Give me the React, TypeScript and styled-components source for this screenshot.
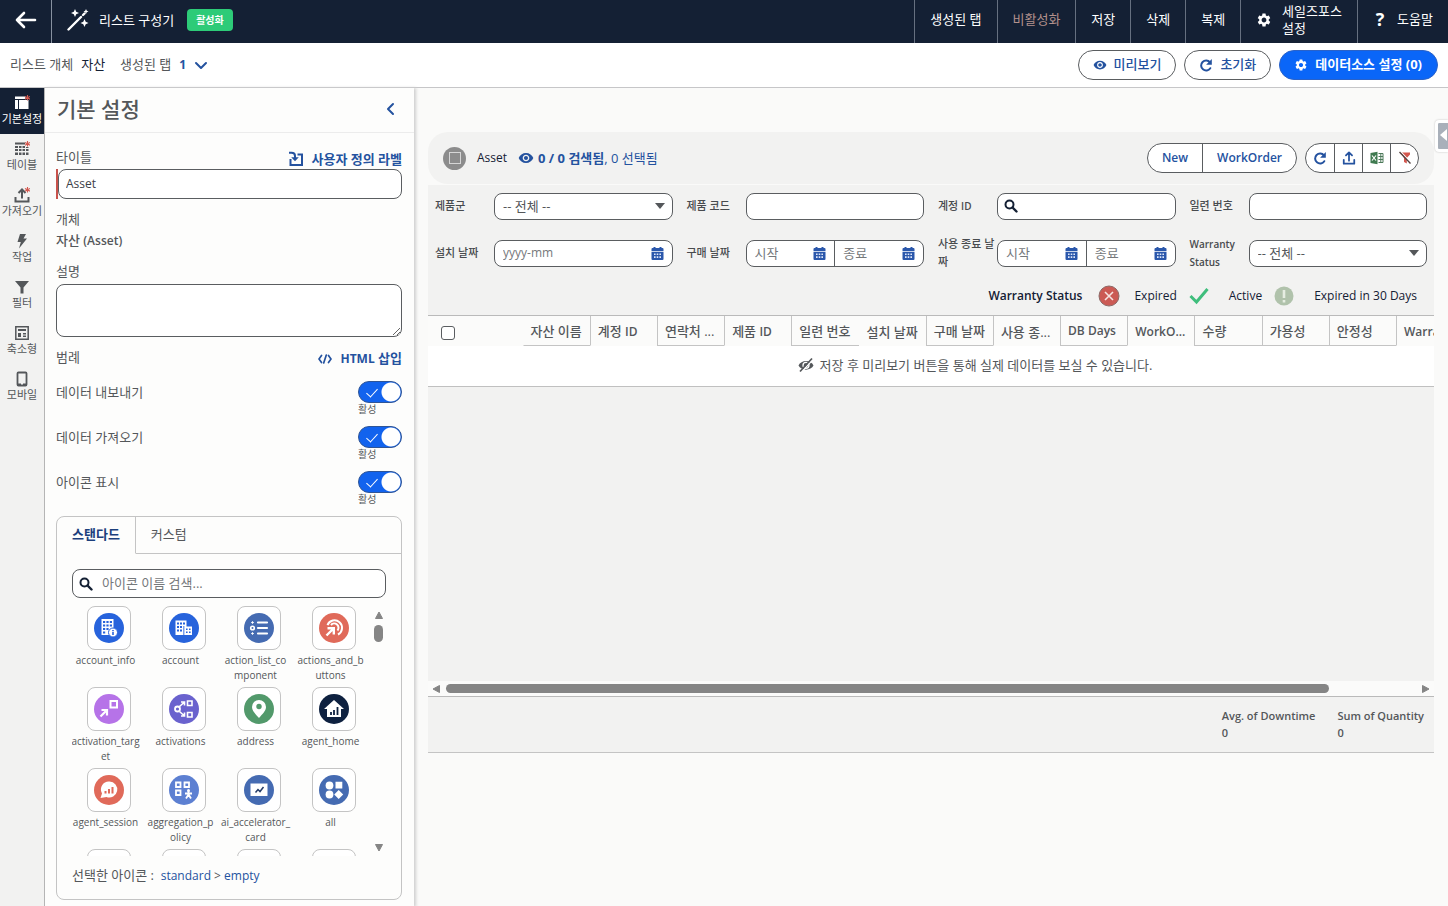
import React from "react";
import styled, { createGlobalStyle, css } from "styled-components";
import { MdSettings, MdVisibility, MdVisibilityOff } from "react-icons/md";

const navy = "#142034";
const link = "#24529f";
const ink = "#54575a";
const line = "#5a5d60";
const soft = "#c4c4c4";
const grey = "#f2f2f1";

const GlobalStyle = createGlobalStyle`
  *, *::before, *::after { box-sizing: border-box; }
  body {
    margin: 0;
    background: #fafaf9;
    color: ${ink};
    font: 13px/18px "Open Sans", "Noto Sans CJK KR", sans-serif;
  }
  button, input, select, textarea { font: inherit; color: inherit; margin: 0; }
  button { background: none; border: 0; padding: 0; cursor: pointer; }
  a { color: ${link}; text-decoration: none; }
`;

/* Latin words set one size down, so that they sit evenly beside Hangul */
const Latin = styled.span<{ $strong?: boolean; $small?: boolean }>`
  font-size: ${(p) => (p.$small ? 10 : 12)}px;
  ${(p) => p.$strong && "font-weight: 600;"}
`;

/* ---------- icons ---------- */

const Glyph = styled.svg<{ $size?: number }>`
  width: ${(p) => p.$size ?? 16}px;
  height: ${(p) => p.$size ?? 16}px;
  flex: none;
  display: block;
  fill: none;
  stroke: currentColor;
  stroke-width: 2;
`;

const BackIcon = () => (
  <Glyph viewBox="0 0 22 22" $size={22} strokeLinecap="round" strokeLinejoin="round">
    <path d="M20 11H2M9 4l-7 7 7 7" strokeWidth="2.6" />
  </Glyph>
);

const WandIcon = () => (
  <Glyph viewBox="0 0 22 22" $size={22}>
    <path d="M1.500 20.500L14 8M16 6l1.500-1.500" strokeWidth="2.4" strokeLinecap="round" />
    <g fill="currentColor" stroke="none">
      <path d="M8 0l1.200 2.800L12 4l-2.800 1.200L8 8 6.800 5.200 4 4l2.800-1.200z" />
      <path d="M19 0l.8 1.700 1.700.8-1.700.8L19 5l-.8-1.700-1.700-.8 1.700-.8z" />
      <path d="M17.500 10l1.200 2.800 2.800 1.200-2.800 1.200-1.200 2.800-1.200-2.800-2.800-1.200 2.800-1.200z" />
    </g>
  </Glyph>
);

const Chevron = ({ left }: { left?: boolean }) => (
  <Glyph viewBox="0 0 14 14" $size={14} strokeLinecap="round" strokeLinejoin="round">
    <path d={left ? "M9 2L4 7l5 5" : "M2 5l5 5 5-5"} />
  </Glyph>
);

const RefreshIcon = () => (
  <Glyph viewBox="0 0 14 14" $size={14}>
    <path d="M11.300 10.200A5 5 0 1 1 11 4.300" strokeLinecap="round" />
    <path d="M12.800 1v5.700H7.100z" fill="currentColor" stroke="none" />
  </Glyph>
);

const SearchIcon = () => (
  <Glyph viewBox="0 0 14 14" $size={14}>
    <circle cx="5.500" cy="5.500" r="4" />
    <path d="M8.500 8.500l4 4" strokeWidth="2.400" strokeLinecap="round" />
  </Glyph>
);

const UploadIcon = ({ size = 16 }: { size?: number }) => (
  <Glyph viewBox="0 0 15 16" $size={size} strokeLinecap="round" strokeLinejoin="round">
    <path d="M1.500 10v4.500h12V10M7.500 11V2M4 5l3.500-3.500L11 5" />
  </Glyph>
);

const ImportIcon = () => (
  <Glyph viewBox="0 0 16 16">
    <path d="M9.500 3.500H14v10.500H2.500V8" />
    <path d="M1 1.800h2.500c2.200 0 3.500 1 3.500 3.200v2.500" />
    <path d="M3.200 6.200h7.600L7 10.200z" fill="currentColor" stroke="none" />
  </Glyph>
);

const CodeIcon = () => (
  <Glyph viewBox="0 0 14 14" $size={14} strokeLinecap="round">
    <path d="M3.500 3.500L1 7l2.500 3.500M10.500 3.500L13 7l-2.500 3.500M8.300 3L5.700 11" strokeWidth="1.700" />
  </Glyph>
);

const CalendarIcon = () => (
  <Glyph viewBox="0 0 12 13" $size={13}>
    <g fill="#2a57ab" stroke="none">
      <path d="M2 0h2v1h4V0h2v1h1a1 1 0 0 1 1 1v2H0V2a1 1 0 0 1 1-1h1z" />
      <path d="M0 4.800h12V12a1 1 0 0 1-1 1H1a1 1 0 0 1-1-1z" />
    </g>
    <path
      d="M2.500 6.500h1.600v1.600H2.500zM5.200 6.500h1.600v1.600H5.200zM7.900 6.500h1.600v1.600H7.900zM2.500 9.300h1.600v1.600H2.500zM5.200 9.300h1.600v1.600H5.200zM7.900 9.300h1.600v1.600H7.900z"
      fill="#dfe8fa"
      stroke="none"
    />
  </Glyph>
);

const ExcelIcon = () => (
  <Glyph viewBox="0 0 14 14" $size={14}>
    <path d="M.5 2l7-1.200v12.400L.5 12z" fill="#3f7a50" stroke="none" />
    <path d="M2 4.500l4 5M6 4.500l-4 5" stroke="#fff" strokeWidth="1.200" />
    <path d="M8.500 2.500H13v9H8.500M8.500 5.500H13M8.500 8.500H13M10.800 2.500v9" stroke="#4d7a5a" strokeWidth="1" />
  </Glyph>
);

const FilterOffIcon = () => (
  <Glyph viewBox="0 0 14 14" $size={14}>
    <path d="M2.500 1.500h9.500v2L8.800 7v5.500L6 11V7z" fill="#d4574e" stroke="none" />
    <path d="M3 .8l10 11" stroke="#fff" strokeWidth="1.200" />
    <path d="M1.500 1l11 11.500" stroke="#52403f" strokeWidth="1.300" />
  </Glyph>
);

const HiddenIcon = () => (
  <Glyph viewBox="0 0 16 16">
    <path d="M.5 8.500C3 2.500 13 2.500 15.500 8.500 13 14 3 14 .5 8.500z" fill="currentColor" stroke="none" />
    <circle cx="8" cy="8.300" r="3" stroke="#fff" strokeWidth="1.300" />
    <path d="M15 2.500L3.500 15" stroke="#fff" strokeWidth="1.400" />
    <path d="M14 1.500L2 14.500" strokeWidth="1.700" />
  </Glyph>
);

const Star = () => <path d="M13.500 0v5.600M11 1.400l5 2.800M16 1.400l-5 2.800" stroke="#d4574e" strokeWidth="1.100" />;

const railIcons: Record<string, React.ReactNode> = {
  basic: (
    <>
      <path d="M1 1.500h10.500v2.500H1zM1 5h3v9H1zM5 5h9.500v9H5z" fill="currentColor" stroke="none" />
      <Star />
    </>
  ),
  table: (
    <>
      <path
        d="M1 1.500h10v2H1zM1 5h3v2H1zM5 5h2.500v2H5zM8.500 5h2.500v2H8.500zM12 6h2.500v1H12zM1 8h3v2H1zM5 8h2.500v2H5zM8.500 8h2.500v2H8.500zM12 8h2.500v2H12zM1 11.500h3v2.500H1zM5 11.500h2.500v2.500H5zM8.500 11.500h2.500v2.500H8.500zM12 11.500h2.500v2.500H12z"
        fill="currentColor"
        stroke="none"
      />
      <Star />
    </>
  ),
  upload: (
    <>
      <path d="M1.500 10v4.500h13V10M8 11.500V2.500M4.500 6L8 2.500 11.500 6" />
      <Star />
    </>
  ),
  bolt: <path d="M6 1h6L9.500 5.500H13L5 15.500l1.800-6.500H3.500z" fill="currentColor" stroke="none" />,
  filter: <path d="M1 2h14L9.500 8.500v6h-3v-6z" fill="currentColor" stroke="none" />,
  compact: (
    <>
      <path d="M1.800 1.800h12.400v12.400H1.800z" strokeWidth="1.500" />
      <path d="M4 4h8v2H4zM4 8h3v4H4zM9 8h3v1.500H9zM9 10.500h3V12H9z" fill="currentColor" stroke="none" />
    </>
  ),
  mobile: (
    <>
      <path d="M4.500 1.500h7a1 1 0 0 1 1 1v11a1 1 0 0 1-1 1h-7a1 1 0 0 1-1-1v-11a1 1 0 0 1 1-1z" strokeWidth="1.800" />
      <path d="M4 13.500h3M9 13.500h3" />
    </>
  ),
};

/* ---------- top bars ---------- */

const Page = styled.div`
  min-height: 100vh;
  display: flex;
  flex-direction: column;
`;

const TopBar = styled.header`
  display: flex;
  height: 43px;
  background: ${navy};
  color: #fff;
`;

const BackButton = styled.button`
  width: 52px;
  display: grid;
  place-items: center;
  padding-bottom: 4px;
  border-right: 1px solid #8791a0;
  color: #fff;
`;

const AppTitle = styled.h1`
  display: flex;
  align-items: center;
  gap: 10px;
  margin: 0;
  padding: 0 13px 4px 15px;
  font-size: 13px;
  font-weight: 400;
`;

const Badge = styled.span`
  align-self: center;
  margin-bottom: 3px;
  padding: 2px 9px;
  border-radius: 4px;
  background: #2dcb78;
  font-size: 10px;
  font-weight: 700;
`;

const TopActions = styled.nav`
  display: flex;
  margin-left: auto;
`;

const TopAction = styled.button<{ $muted?: boolean }>`
  display: flex;
  align-items: center;
  gap: 10px;
  padding: 0 15px 4px;
  border-left: 1px solid #667080;
  color: ${(p) => (p.$muted ? "#b3918c" : "#fff")};
  line-height: 17px;
  text-align: left;
`;

const TwoLine = styled.span`
  width: 60px;
`;

const Question = styled.span`
  width: 14px;
  font-size: 18px;
  font-weight: 700;
  text-align: center;
`;

const SubBar = styled.div`
  display: flex;
  align-items: center;
  gap: 8px;
  height: 45px;
  padding: 0 10px;
  background: #fff;
  border-bottom: 1px solid #c6c6c8;
`;

const Crumb = styled.span<{ $dark?: boolean; $gap?: boolean }>`
  padding-bottom: 2px;
  padding-left: ${(p) => (p.$gap ? 7 : 0)}px;
  color: ${(p) => (p.$dark ? navy : ink)};
`;

const TabCount = styled.button`
  display: flex;
  align-items: center;
  gap: 8px;
  color: ${link};
  font-weight: 700;
`;

const SubActions = styled.div`
  display: flex;
  gap: 8px;
  margin-left: auto;
`;

const Pill = styled.button<{ $primary?: boolean }>`
  display: flex;
  align-items: center;
  gap: 7px;
  height: 30px;
  padding: ${(p) => (p.$primary ? "0 15px 0 14px" : "0 14px")};
  border: 1px solid ${(p) => (p.$primary ? "#2a62c8" : line)};
  border-radius: 15px;
  background: ${(p) => (p.$primary ? "#0a66f8" : "#fff")};
  color: ${(p) => (p.$primary ? "#fff" : link)};
  font-weight: ${(p) => (p.$primary ? 700 : 500)};
  span { padding-bottom: 2px; }
  svg { width: 14px; height: 14px; }
`;

/* ---------- side rail ---------- */

const Body = styled.div`
  flex: 1;
  display: flex;
  align-items: stretch;
`;

const Rail = styled.nav`
  flex: none;
  width: 45px;
  background: ${grey};
  border-right: 1px solid #b4b4b4;
`;

const RailItem = styled.button<{ $active?: boolean }>`
  display: flex;
  flex-direction: column;
  align-items: center;
  width: 44px;
  height: 46px;
  padding-top: 7px;
  background: ${(p) => (p.$active ? navy : "transparent")};
  color: ${(p) => (p.$active ? "#fff" : ink)};
  font-size: 11px;
  line-height: 16px;
  white-space: nowrap;
`;

const rail = [
  { key: "basic", label: "기본설정" },
  { key: "table", label: "테이블" },
  { key: "upload", label: "가져오기" },
  { key: "bolt", label: "작업" },
  { key: "filter", label: "필터" },
  { key: "compact", label: "축소형" },
  { key: "mobile", label: "모바일" },
];

/* ---------- settings panel ---------- */

const Panel = styled.aside`
  flex: none;
  width: 369px;
  background: #fdfdfc;
  box-shadow: 2px 0 3px #cfcfcf;
  z-index: 1;
`;

const PanelHead = styled.div`
  display: flex;
  align-items: center;
  justify-content: space-between;
  height: 45px;
  padding: 0 16px 2px 12px;
  border-bottom: 1px solid #ececec;
  button { color: ${link}; }
`;

const PanelTitle = styled.h2`
  margin: 0;
  font-size: 21px;
  line-height: 28px;
  font-weight: 500;
`;

const PanelBody = styled.div`
  padding: 12px 12px 7px 11px;
`;

const FieldHead = styled.div`
  display: flex;
  align-items: center;
  justify-content: space-between;
  height: 24px;
`;

const FieldLabel = styled.label`
  display: block;
  line-height: 22px;
`;

const LinkButton = styled.button`
  display: flex;
  align-items: center;
  gap: 8px;
  padding-top: 3px;
  color: ${link};
  font-weight: 700;
`;

const Required = styled.div`
  border-left: 2px solid #c8524b;
`;

const TitleInput = styled.input`
  display: block;
  width: 100%;
  height: 30px;
  padding: 0 7px 2px;
  border: 1px solid ${line};
  border-radius: 8px;
  background: #fff;
  color: #3c4148;
  font-size: 12px;
`;

const FieldValue = styled.div`
  line-height: 20px;
  font-weight: 500;
`;

const Gap = styled.div`
  padding-top: 9px;
`;

const TextArea = styled.textarea`
  display: block;
  width: 100%;
  height: 53px;
  margin: 2px 0 8px;
  border: 1px solid ${line};
  border-radius: 8px;
  background: #fff;
  resize: vertical;
`;

const ToggleRow = styled.div`
  display: flex;
  justify-content: space-between;
  height: 45px;
  padding-top: 12px;
`;

const ToggleBox = styled.div`
  width: 44px;
  font-size: 10px;
  line-height: 12px;
`;

const Toggle = styled.input`
  appearance: none;
  display: block;
  width: 44px;
  height: 22px;
  border: 1px solid #2f5596;
  border-radius: 11px;
  background: radial-gradient(circle at 32px 10px, #fff 9px, transparent 10px), #1263ee;
  position: relative;
  &::after {
    content: "";
    position: absolute;
    left: 10px;
    top: 4px;
    width: 6px;
    height: 11px;
    border: solid #fff;
    border-width: 0 1px 1px 0;
    rotate: 42deg;
  }
`;

const Picker = styled.section`
  margin-top: 12px;
  border: 1px solid ${soft};
  border-radius: 8px;
`;

const Tabs = styled.div`
  display: flex;
  height: 37px;
  &::after { content: ""; flex: 1; border-bottom: 1px solid ${soft}; }
`;

const Tab = styled.button<{ $active?: boolean }>`
  padding: 0 15px 2px;
  border-bottom: 1px solid ${soft};
  ${(p) =>
    p.$active &&
    css`
      border-right: 1px solid ${soft};
      border-bottom-color: transparent;
      color: #1c3f7c;
      font-weight: 700;
    `}
`;

const PickerBody = styled.div`
  padding: 15px 15px 14px;
`;

const SearchBox = styled.div<{ $compact?: boolean }>`
  display: flex;
  align-items: center;
  gap: ${(p) => (p.$compact ? 4 : 8)}px;
  flex: 1;
  min-width: 0;
  height: ${(p) => (p.$compact ? 27 : 29)}px;
  padding-left: 6px;
  border: 1px solid ${line};
  border-radius: 8px;
  background: #fff;
  color: ${navy};
`;

const BareInput = styled.input`
  flex: 1;
  min-width: 0;
  padding: 0 0 1px 1px;
  border: 0;
  outline: 0;
  background: none;
  color: ${ink};
  &::placeholder { color: #75787b; }
`;

const Scroller = styled.div`
  display: flex;
  height: 254px;
  margin-top: 4px;
  overflow: hidden;
`;

const IconGrid = styled.div`
  display: grid;
  grid-template-columns: repeat(4, 75px);
  grid-auto-rows: 81px;
  padding-top: 4px;
`;

const IconCell = styled.button`
  display: flex;
  flex-direction: column;
  align-items: flex-start;
  width: 75px;
  font-size: 10px;
  line-height: 15px;
`;

const IconFrame = styled.span`
  display: grid;
  place-items: center;
  flex: none;
  width: 44px;
  height: 44px;
  margin: 0 15px 3px;
  border: 1px solid ${soft};
  border-radius: 8px;
  background: #fff;
`;

const IconName = styled.span`
  display: flex;
  justify-content: center;
  width: 67px;
  white-space: nowrap;
`;

const VBar = styled.div`
  display: flex;
  flex-direction: column;
  align-items: center;
  width: 13px;
  padding: 8px 0 3px;
  color: #858585;
`;

const VThumb = styled.span`
  width: 9px;
  height: 17px;
  margin: 5px 0 auto;
  border-radius: 5px;
  background: #858585;
`;

const Picked = styled.p`
  margin: 10px 0 0;
`;

const Arrow = ({ dir }: { dir: "up" | "down" | "left" | "right" }) => {
  const d = {
    up: "M5 2l3.500 6.500h-7z",
    down: "M5 8L1.500 1.500h7z",
    left: "M2 5l6.500-3.500v7z",
    right: "M8 5L1.500 1.500v7z",
  }[dir];
  return (
    <Glyph viewBox="0 0 10 10" $size={10}>
      <path d={d} fill="currentColor" strokeWidth="1" strokeLinejoin="round" />
    </Glyph>
  );
};

const w = { fill: "none", stroke: "#fff", strokeWidth: 1.8 };

const standardIcons: { lines: string[]; color: string; art: React.ReactNode }[] = [
  {
    lines: ["account_info"],
    color: "#2763dc",
    art: (
      <>
        <path d="M7.500 6h12v16h-12z" fill="#fff" />
        <path
          d="M9 8h2.200v2H9zM12.400 8h2.200v2h-2.200zM15.800 8H18v2h-2.200zM9 11.500h2.200v2H9zM12.400 11.500h2.200v2h-2.200zM15.800 11.500H18v2h-2.200zM9 15h2.200v2H9zM12.400 15h2.200v2h-2.200zM9 18.500h2.200v2H9z"
          fill="#2763dc"
        />
        <circle cx="19" cy="19.500" r="4.500" fill="#fff" stroke="#2763dc" />
        <path d="M19 17v1.300M19 19v3" stroke="#2763dc" strokeWidth="1.600" />
      </>
    ),
  },
  {
    lines: ["account"],
    color: "#2763dc",
    art: (
      <>
        <path d="M6.500 7.500h11v14.500h-11zM15.500 13.500H23V22h-7.500z" fill="#fff" />
        <path
          d="M8 9.500h2v2H8zM11 9.500h2v2h-2zM14 9.500h2v2h-2zM8 13h2v2H8zM11 13h2v2h-2zM8 16.500h2v2H8zM11 16.500h2v2h-2zM17 15.500h1.600v1.600H17zM20 15.500h1.600v1.600H20zM17 18.500h1.600v1.600H17zM20 18.500h1.600v1.600H20zM14.400 13h.9v9h-.9z"
          fill="#2763dc"
        />
      </>
    ),
  },
  {
    lines: ["action_list_co", "mponent"],
    color: "#456bb2",
    art: (
      <>
        <path d="M14 9.500h9M14 15h9M14 20.500h9" {...w} strokeWidth={2.2} strokeLinecap="round" />
        <circle cx="8.500" cy="15" r="1.800" {...w} strokeWidth={1.6} />
        <path d="M8.500 8.200v2.600M8.500 19.200v2.600M7.200 9.500h2.600M7.200 20.500h2.600" {...w} strokeWidth={1.1} />
      </>
    ),
  },
  {
    lines: ["actions_and_b", "uttons"],
    color: "#e06a5a",
    art: (
      <>
        <path d="M7.500 22.500l7-7M8.500 15.200h6.300v6.300" {...w} strokeWidth={2.4} />
        <path d="M8.500 12.200a7.500 7.500 0 1 1 10.500 9.300M12 12a4.200 4.200 0 1 1 6.500 5.500" {...w} strokeWidth={2} />
      </>
    ),
  },
  {
    lines: ["activation_targ", "et"],
    color: "#b673e8",
    art: (
      <>
        <path d="M16.500 7h6.500v6.500h-6.500z" {...w} strokeWidth={2} />
        <path d="M6.500 22.500l6.500-6.500M7.500 16h5.500v5.500" {...w} strokeWidth={2.2} />
      </>
    ),
  },
  {
    lines: ["activations"],
    color: "#6a62ce",
    art: (
      <>
        <circle cx="8.500" cy="15" r="2.500" {...w} />
        <path
          d="M18.500 7h4.500v4.500h-4.500zM18.500 18.500H23V23h-4.500zM10.500 12.500l4.500-4M12 8h3.500v3.500M10.500 17.500l4.500 4M12 22h3.500v-3.500"
          {...w}
          strokeWidth={1.6}
        />
      </>
    ),
  },
  {
    lines: ["address"],
    color: "#52996b",
    art: (
      <>
        <path d="M15 6a7 7 0 0 1 7 7c0 4-4 7.500-7 11-3-3.500-7-7-7-11a7 7 0 0 1 7-7z" fill="#fff" />
        <circle cx="15" cy="12.500" r="2.700" fill="#52996b" />
      </>
    ),
  },
  {
    lines: ["agent_home"],
    color: "#0e2140",
    art: (
      <>
        <path d="M15 6l10 9h-3v8H8v-8H5z" fill="#fff" />
        <path d="M12 21v-3M15 21v-5M18.500 21v-8" stroke="#0e2140" strokeWidth="1.800" />
      </>
    ),
  },
  {
    lines: ["agent_session"],
    color: "#e06a5a",
    art: (
      <>
        <path d="M15.500 6.500a8 8 0 1 1-3 15.500L6.500 23l1.500-4.500a8 8 0 0 1 7.500-12z" fill="#fff" />
        <path d="M11.500 18.500v-2.500M15 18.500v-4.500M18.500 18.500v-6.500" stroke="#e06a5a" strokeWidth="2" />
      </>
    ),
  },
  {
    lines: ["aggregation_p", "olicy"],
    color: "#5d80d2",
    art: (
      <>
        <path d="M7 7.500h4.500V12H7zM15.500 7.500H20V12h-4.500zM7 15.500h4.500V20H7z" {...w} />
        <circle cx="19.500" cy="15.500" r="1.500" fill="#fff" />
        <path d="M19.500 16v4M16 18.500h7M19.500 19.500L17 23.500M19.500 19.500l2.500 4" {...w} />
      </>
    ),
  },
  {
    lines: ["ai_accelerator_", "card"],
    color: "#456bb2",
    art: (
      <>
        <path d="M6.500 8.500h17v12.500h-17z" fill="#fff" />
        <path d="M11.500 17.500l2.500-3 2 2 3.500-4.500" stroke="#233a66" strokeWidth="1.500" fill="none" />
      </>
    ),
  },
  {
    lines: ["all"],
    color: "#456bb2",
    art: (
      <>
        <circle cx="10.500" cy="10.500" r="3.900" fill="#fff" />
        <path d="M16.500 6.800h6.800v6.800h-6.800zM19.700 15l4.500 4.500-4.500 4.500-4.500-4.500z" fill="#fff" />
        <circle cx="10.500" cy="19.500" r="3.900" fill="#fff" />
      </>
    ),
  },
  ...[0, 1, 2, 3].map(() => ({ lines: [], color: "#456bb2", art: null })),
];

/* ---------- list preview ---------- */

const Main = styled.main`
  flex: 1;
  min-width: 0;
  padding: 44px 14px 24px;
`;

const CardHead = styled.div`
  display: flex;
  align-items: center;
  gap: 11px;
  height: 52px;
  margin-bottom: 1px;
  padding: 0 15px;
  border-radius: 20px;
  background: ${grey};
  color: ${navy};
`;

const ObjectMark = styled.span`
  display: grid;
  place-items: center;
  width: 23px;
  height: 23px;
  border-radius: 50%;
  background: #8c8c8c;
  &::after {
    content: "";
    width: 12px;
    height: 12px;
    border: 1px solid #d6d6d6;
  }
`;

const Counts = styled.span`
  display: flex;
  align-items: center;
  gap: 4px;
  color: ${link};
  svg { width: 16px; height: 16px; }
`;

const HeadActions = styled.div`
  display: flex;
  gap: 8px;
  margin-left: auto;
`;

const ButtonGroup = styled.div`
  display: flex;
  height: 30px;
  border: 1px solid ${line};
  border-radius: 15px;
  background: #fff;
  overflow: hidden;
`;

const GroupButton = styled.button<{ $icon?: boolean }>`
  display: grid;
  place-items: center;
  min-width: ${(p) => (p.$icon ? 28 : 0)}px;
  padding: ${(p) => (p.$icon ? "0" : "0 14px 1px")};
  color: ${link};
  font-size: 12px;
  font-weight: 600;
  & + & { border-left: 1px solid ${line}; }
`;

const Filters = styled.div`
  display: grid;
  grid-template-columns: repeat(4, minmax(0, 1fr));
  row-gap: 11px;
  padding: 3px 0 10px;
  background: ${grey};
`;

const FilterItem = styled.div`
  display: flex;
  align-items: center;
  height: 36px;
  padding: 0 7px;
`;

const FilterLabel = styled.label<{ $latin?: boolean }>`
  flex: none;
  width: 59px;
  font-size: ${(p) => (p.$latin ? 10 : 11)}px;
  line-height: 18px;
  font-weight: ${(p) => (p.$latin ? 600 : 500)};
  color: #484b4e;
`;

const TextBox = styled.input`
  flex: 1;
  min-width: 0;
  height: 27px;
  padding: 0 8px;
  border: 1px solid ${line};
  border-radius: 8px;
  background: #fff;
`;

const SelectWrap = styled.div`
  flex: 1;
  display: grid;
  align-items: center;
  svg, select { grid-area: 1 / 1; }
  svg { justify-self: end; margin-right: 8px; pointer-events: none; color: #54575a; width: 10px; }
`;

const Select = styled.select`
  appearance: none;
  width: 100%;
  height: 27px;
  padding: 0 8px 1px;
  border: 1px solid ${line};
  border-radius: 8px;
  background: #fff;
`;

const DateGroup = styled.div`
  display: flex;
  flex: 1;
  min-width: 0;
  height: 27px;
  border: 1px solid ${line};
  border-radius: 8px;
  background: #fff;
`;

const DateField = styled.div<{ $latin?: boolean }>`
  display: flex;
  align-items: center;
  flex: 1;
  min-width: 0;
  padding: 0 8px 0 7px;
  font-size: ${(p) => (p.$latin ? 12 : 13)}px;
  & + & { border-left: 1px solid ${line}; }
`;

const Legend = styled.div`
  display: flex;
  align-items: center;
  justify-content: flex-end;
  height: 34px;
  padding: 0 17px 4px 0;
  background: ${grey};
  color: ${navy};
  font-size: 12px;
`;

const LegendTitle = styled.strong`
  margin-right: 16px;
  font-weight: 600;
`;

const LegendItem = styled.span<{ $wide?: boolean }>`
  display: flex;
  align-items: center;
  gap: ${(p) => (p.$wide ? 20 : 14)}px;
  & + & { margin-left: 12px; }
`;

const TableArea = styled.div`
  height: 366px;
  overflow: hidden;
  border-top: 1px solid #bababa;
  background: ${grey};
`;

const Table = styled.table`
  width: 100%;
  table-layout: fixed;
  border-collapse: separate;
  border-spacing: 0;
  background: #fff;
`;

const Th = styled.th<{ $boxed?: boolean; $left?: boolean }>`
  height: 30px;
  padding: ${(p) => (p.$boxed ? "0 0 0 7px" : "2px 0 0 7px")};
  overflow: hidden;
  white-space: nowrap;
  text-align: left;
  font-weight: 500;
  background: #fbfbfa;
  border-left: 1px solid ${(p) => (p.$left ? soft : "transparent")};
  border-bottom: 1px solid ${(p) => (p.$boxed ? soft : "transparent")};
`;

const CheckTh = styled.th`
  padding: 4px 0 0 13px;
  text-align: left;
  background: #fbfbfa;
`;

const Column = styled.col`
  width: 6.680%;
`;

const FirstColumn = styled.col`
  width: 9.400%;
`;

const Check = styled.input`
  appearance: none;
  display: block;
  width: 14px;
  height: 14px;
  border: 1px solid ${line};
  border-radius: 3px;
  background: #fff;
`;

const EmptyCell = styled.td`
  height: 41px;
  padding: 0 0 2px;
  border-bottom: 1px solid #c0c0c0;
`;

const EmptyNote = styled.div`
  display: flex;
  align-items: center;
  justify-content: center;
  gap: 6px;
  padding-left: 88px;
`;

const HBar = styled.div`
  display: flex;
  align-items: center;
  gap: 5px;
  height: 15px;
  padding: 0 3px;
  background: #fbfbfa;
  color: #858585;
`;

const HTrack = styled.span`
  flex: 1;
  &::before {
    content: "";
    display: block;
    width: 91%;
    height: 9px;
    border-radius: 5px;
    background: #858585;
  }
`;

const Totals = styled.dl`
  display: flex;
  justify-content: flex-end;
  gap: 22px;
  height: 57px;
  margin: 0;
  padding: 10px 10px 0;
  border-top: 1px solid #bababa;
  border-bottom: 1px solid ${soft};
  background: ${grey};
  font-size: 11px;
  line-height: 17px;
  font-weight: 600;
  dd { margin: 0; }
`;

const EdgeHandle = styled.button`
  position: absolute;
  right: 0;
  top: 120px;
  width: 13px;
  height: 32px;
  border: 3px solid #fff;
  border-right: 0;
  border-radius: 4px 0 0 4px;
  background: #a9b0ba;
  box-shadow: 0 0 2px #bbb;
  color: #fff;
  z-index: 2;
`;

const columns = [
  { name: "자산 이름", boxed: true },
  { name: "계정 ID", left: true },
  { name: "연락처 ...", boxed: true, left: true },
  { name: "제품 ID", left: true },
  { name: "일련 번호", boxed: true, left: true },
  { name: "설치 날짜" },
  { name: "구매 날짜", boxed: true, left: true },
  { name: "사용 종...", left: true },
  { name: "DB Days", boxed: true, left: true },
  { name: "WorkO...", left: true },
  { name: "수량", boxed: true, left: true },
  { name: "가용성", boxed: true, left: true },
  { name: "안정성", boxed: true, left: true },
];

const isLatin = (text: string) => /^[\x20-\x7e]+$/.test(text);

/* Sets the Latin words of a Korean heading in the matching weight */
const Heading = ({ text, small }: { text: string; small?: boolean }) => (
  <>
    {text.split(/([A-Za-z][A-Za-z .]*)/).map((part, i) =>
      i % 2 ? (
        <Latin key={i} $strong $small={small}>
          {part}
        </Latin>
      ) : (
        part
      ),
    )}
  </>
);

const DateInput = ({ id, hint, label }: { id?: string; hint: string; label: string }) => (
  <DateField $latin={isLatin(hint)}>
    <BareInput id={id} placeholder={hint} aria-label={label} />
    <button aria-label={`${label} 선택`}>
      <CalendarIcon />
    </button>
  </DateField>
);

const AllSelect = ({ id }: { id: string }) => (
  <SelectWrap>
    <Select id={id}>
      <option>-- 전체 --</option>
    </Select>
    <svg viewBox="0 0 10 6" height="6">
      <path d="M0 0h10L5 6z" fill="currentColor" />
    </svg>
  </SelectWrap>
);

const Filter = ({ id, label, children }: { id: string; label: string; children: React.ReactNode }) => (
  <FilterItem>
    <FilterLabel htmlFor={id} $latin={isLatin(label)}>
      <Heading text={label} small />
    </FilterLabel>
    {children}
  </FilterItem>
);

const toggles = ["데이터 내보내기", "데이터 가져오기", "아이콘 표시"];

export default function App() {
  return (
    <Page>
      <GlobalStyle />
      <TopBar>
        <BackButton aria-label="뒤로">
          <BackIcon />
        </BackButton>
        <AppTitle>
          <WandIcon />
          리스트 구성기
        </AppTitle>
        <Badge>활성화</Badge>
        <TopActions>
          <TopAction>생성된 탭</TopAction>
          <TopAction $muted>비활성화</TopAction>
          <TopAction>저장</TopAction>
          <TopAction>삭제</TopAction>
          <TopAction>복제</TopAction>
          <TopAction>
            <MdSettings size={16} />
            <TwoLine>세일즈포스 설정</TwoLine>
          </TopAction>
          <TopAction>
            <Question>?</Question>
            도움말
          </TopAction>
        </TopActions>
      </TopBar>
      <SubBar>
        <Crumb>리스트 개체</Crumb>
        <Crumb $dark>자산</Crumb>
        <Crumb $gap>생성된 탭</Crumb>
        <TabCount>
          <Latin>1</Latin>
          <Chevron />
        </TabCount>
        <SubActions>
          <Pill>
            <MdVisibility />
            <span>미리보기</span>
          </Pill>
          <Pill>
            <RefreshIcon />
            <span>초기화</span>
          </Pill>
          <Pill $primary>
            <MdSettings />
            <span>데이터소스 설정 (0)</span>
          </Pill>
        </SubActions>
      </SubBar>
      <Body>
        <Rail>
          {rail.map((r, i) => (
            <RailItem key={r.key} $active={i === 0}>
              <Glyph viewBox="0 0 16 16">{railIcons[r.key]}</Glyph>
              {r.label}
            </RailItem>
          ))}
        </Rail>
        <Panel>
          <PanelHead>
            <PanelTitle>기본 설정</PanelTitle>
            <button aria-label="접기">
              <Chevron left />
            </button>
          </PanelHead>
          <PanelBody>
            <FieldHead>
              <FieldLabel htmlFor="title">타이틀</FieldLabel>
              <LinkButton>
                <ImportIcon />
                사용자 정의 라벨
              </LinkButton>
            </FieldHead>
            <Required>
              <TitleInput id="title" defaultValue="Asset" />
            </Required>
            <Gap>
              <FieldLabel as="div">개체</FieldLabel>
              <FieldValue>
                자산 <Latin $strong>(Asset)</Latin>
              </FieldValue>
            </Gap>
            <Gap>
              <FieldLabel htmlFor="desc">설명</FieldLabel>
              <TextArea id="desc" />
            </Gap>
            <FieldHead>
              <FieldLabel as="div">범례</FieldLabel>
              <LinkButton>
                <CodeIcon />
                <span>
                  <Latin>HTML</Latin> 삽입
                </span>
              </LinkButton>
            </FieldHead>
            {toggles.map((t, i) => (
              <ToggleRow key={t}>
                <FieldLabel htmlFor={`toggle-${i}`}>{t}</FieldLabel>
                <ToggleBox>
                  <Toggle type="checkbox" id={`toggle-${i}`} defaultChecked />
                  활성
                </ToggleBox>
              </ToggleRow>
            ))}
            <Picker>
              <Tabs role="tablist">
                <Tab role="tab" aria-selected $active>
                  스탠다드
                </Tab>
                <Tab role="tab">커스텀</Tab>
              </Tabs>
              <PickerBody>
                <SearchBox>
                  <SearchIcon />
                  <BareInput placeholder="아이콘 이름 검색..." aria-label="아이콘 이름 검색" />
                </SearchBox>
                <Scroller>
                  <IconGrid>
                    {standardIcons.map((icon, i) => (
                      <IconCell key={i}>
                        <IconFrame>
                          {icon.art && (
                            <svg width="30" height="30" viewBox="0 0 30 30">
                              <circle cx="15" cy="15" r="15" fill={icon.color} />
                              {icon.art}
                            </svg>
                          )}
                        </IconFrame>
                        {icon.lines.map((l) => (
                          <IconName key={l}>{l}</IconName>
                        ))}
                      </IconCell>
                    ))}
                  </IconGrid>
                  <VBar>
                    <Arrow dir="up" />
                    <VThumb />
                    <Arrow dir="down" />
                  </VBar>
                </Scroller>
                <Picked>
                  선택한 아이콘 :&nbsp;{" "}
                  <Latin>
                    <a href="#standard">standard</a> &gt; <a href="#empty">empty</a>
                  </Latin>
                </Picked>
              </PickerBody>
            </Picker>
          </PanelBody>
        </Panel>
        <Main>
          <CardHead>
            <ObjectMark />
            <Latin>Asset</Latin>
            <Counts>
              <MdVisibility />
              <span>
                <b>0 / 0 검색됨</b>, 0 선택됨
              </span>
            </Counts>
            <HeadActions>
              <ButtonGroup>
                <GroupButton>New</GroupButton>
                <GroupButton>WorkOrder</GroupButton>
              </ButtonGroup>
              <ButtonGroup>
                <GroupButton $icon aria-label="새로 고침">
                  <RefreshIcon />
                </GroupButton>
                <GroupButton $icon aria-label="업로드">
                  <UploadIcon size={14} />
                </GroupButton>
                <GroupButton $icon aria-label="엑셀">
                  <ExcelIcon />
                </GroupButton>
                <GroupButton $icon aria-label="필터 해제">
                  <FilterOffIcon />
                </GroupButton>
              </ButtonGroup>
            </HeadActions>
          </CardHead>
          <Filters>
            <Filter id="f-group" label="제품군">
              <AllSelect id="f-group" />
            </Filter>
            <Filter id="f-code" label="제품 코드">
              <TextBox id="f-code" />
            </Filter>
            <Filter id="f-account" label="계정 ID">
              <SearchBox $compact>
                <SearchIcon />
                <BareInput id="f-account" />
              </SearchBox>
            </Filter>
            <Filter id="f-serial" label="일련 번호">
              <TextBox id="f-serial" />
            </Filter>
            <Filter id="f-install" label="설치 날짜">
              <DateGroup>
                <DateInput id="f-install" hint="yyyy-mm" label="설치 날짜" />
              </DateGroup>
            </Filter>
            <Filter id="f-buy" label="구매 날짜">
              <DateGroup>
                <DateInput id="f-buy" hint="시작" label="구매 시작" />
                <DateInput hint="종료" label="구매 종료" />
              </DateGroup>
            </Filter>
            <Filter id="f-end" label="사용 종료 날짜">
              <DateGroup>
                <DateInput id="f-end" hint="시작" label="사용 종료 시작" />
                <DateInput hint="종료" label="사용 종료 끝" />
              </DateGroup>
            </Filter>
            <Filter id="f-status" label="Warranty Status">
              <AllSelect id="f-status" />
            </Filter>
          </Filters>
          <Legend>
            <LegendTitle>Warranty Status</LegendTitle>
            <LegendItem>
              <svg width="22" height="22" viewBox="0 0 22 22">
                <circle cx="11" cy="11" r="10" fill="#cb5a54" stroke="#8d6a67" />
                <path d="M7 7l8 8M15 7l-8 8" stroke="#f6e4e2" strokeWidth="1.600" />
              </svg>
              Expired
            </LegendItem>
            <LegendItem $wide>
              <svg width="20" height="18" viewBox="0 0 20 18">
                <path d="M1.500 9l6 6L18.500 2" fill="none" stroke="#3fbe7c" strokeWidth="3" />
              </svg>
              Active
            </LegendItem>
            <LegendItem $wide>
              <svg width="20" height="20" viewBox="0 0 20 20">
                <circle cx="10" cy="10" r="9.500" fill="#b0c2ab" />
                <path d="M10 4v8M10 14v2.500" stroke="#e6ede2" strokeWidth="2.600" />
              </svg>
              Expired in 30 Days
            </LegendItem>
          </Legend>
          <TableArea>
            <Table>
              <colgroup>
                <FirstColumn />
                {columns.map((c) => (
                  <Column key={c.name} />
                ))}
                <col />
              </colgroup>
              <thead>
                <tr>
                  <CheckTh>
                    <Check type="checkbox" aria-label="모두 선택" />
                  </CheckTh>
                  {columns.map((c) => (
                    <Th key={c.name} $boxed={c.boxed} $left={c.left}>
                      <Heading text={c.name} />
                    </Th>
                  ))}
                  <Th $left>
                    <Heading text="Warranty" />
                  </Th>
                </tr>
              </thead>
              <tbody>
                <tr>
                  <EmptyCell colSpan={15}>
                    <EmptyNote>
                      <HiddenIcon />
                      저장 후 미리보기 버튼을 통해 실제 데이터를 보실 수 있습니다.
                    </EmptyNote>
                  </EmptyCell>
                </tr>
              </tbody>
            </Table>
          </TableArea>
          <HBar>
            <Arrow dir="left" />
            <HTrack />
            <Arrow dir="right" />
          </HBar>
          <Totals>
            <div>
              <dt>Avg. of Downtime</dt>
              <dd>0</dd>
            </div>
            <div>
              <dt>Sum of Quantity</dt>
              <dd>0</dd>
            </div>
          </Totals>
        </Main>
      </Body>
      <EdgeHandle aria-label="펼치기">
        <svg width="8" height="12" viewBox="0 0 8 12">
          <path d="M8 0v12L1 6z" fill="#fff" />
        </svg>
      </EdgeHandle>
    </Page>
  );
}
